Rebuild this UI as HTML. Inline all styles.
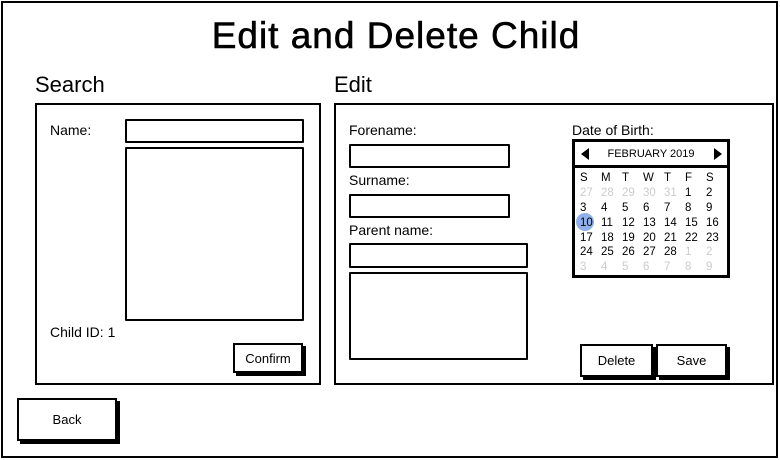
<!DOCTYPE html>
<html><head><style>
*{margin:0;padding:0;box-sizing:border-box}
body{width:780px;height:460px;background:#fff;font-family:"Liberation Sans",sans-serif;color:#000;position:relative;overflow:hidden}
.a{position:absolute}
.box{position:absolute;border:2px solid #000;background:#fff}
.in{position:absolute;border:2px solid #000;background:#fff;border-radius:1px}
.btn{position:absolute;border:2px solid #000;background:#fff;box-shadow:3px 3px 0 #000;font-size:13px;display:flex;align-items:center;justify-content:center}
.lbl{position:absolute;font-size:14px}
.cal td{width:21px;height:14.8px;font-size:11.5px;text-align:left;padding:0 0 0 2px}
.g{color:#ccc}
</style></head><body>
<div class="box" style="left:1px;top:1px;width:777px;height:457px"></div>
<div class="a" style="left:0;width:792px;top:15px;text-align:center;font-size:37px;font-weight:normal;letter-spacing:1px;-webkit-text-stroke:0.6px #000">Edit and Delete Child</div>
<div class="a" style="left:35px;top:72px;font-size:22px">Search</div>
<div class="a" style="left:334px;top:72px;font-size:22px">Edit</div>
<div class="box" style="left:35px;top:103px;width:286px;height:282px"></div>
<div class="box" style="left:334px;top:103px;width:440px;height:282px"></div>
<div class="lbl" style="left:50px;top:122px">Name:</div>
<div class="in" style="left:125px;top:119px;width:179px;height:24px"></div>
<div class="in" style="left:125px;top:147px;width:179px;height:174px"></div>
<div class="lbl" style="left:50px;top:324px">Child ID: 1</div>
<div class="btn" style="left:233px;top:343px;width:70px;height:30px">Confirm</div>
<div class="btn" style="left:17px;top:398px;width:100px;height:43px">Back</div>
<div class="lbl" style="left:349px;top:122px">Forename:</div>
<div class="in" style="left:349px;top:144px;width:161px;height:24px"></div>
<div class="lbl" style="left:349px;top:172px">Surname:</div>
<div class="in" style="left:349px;top:194px;width:161px;height:24px"></div>
<div class="lbl" style="left:349px;top:222px">Parent name:</div>
<div class="in" style="left:349px;top:243px;width:179px;height:25px"></div>
<div class="in" style="left:349px;top:272px;width:179px;height:88px"></div>
<div class="lbl" style="left:572px;top:122px">Date of Birth:</div>
<div class="box" style="left:572px;top:139px;width:158px;height:139px;border-width:3px">
 <div class="a" style="left:0;top:0;width:152px;height:26px;border-bottom:3px solid #000;font-size:11px;text-align:center;line-height:24px">FEBRUARY 2019</div>
 <div class="a" style="left:6px;top:6px;width:0;height:0;border-top:6px solid transparent;border-bottom:6px solid transparent;border-right:8px solid #000"></div>
 <div class="a" style="left:139px;top:6px;width:0;height:0;border-top:6px solid transparent;border-bottom:6px solid transparent;border-left:8px solid #000"></div>
 <div class="a" style="left:1px;top:71px;width:18px;height:18px;border-radius:50%;background:#8fb0e8"></div>
 <table class="cal a" style="left:3px;top:29px;border-collapse:collapse">
 <tr><td>S</td><td>M</td><td>T</td><td>W</td><td>T</td><td>F</td><td>S</td></tr>
 <tr><td class="g">27</td><td class="g">28</td><td class="g">29</td><td class="g">30</td><td class="g">31</td><td>1</td><td>2</td></tr>
 <tr><td>3</td><td>4</td><td>5</td><td>6</td><td>7</td><td>8</td><td>9</td></tr>
 <tr><td>10</td><td>11</td><td>12</td><td>13</td><td>14</td><td>15</td><td>16</td></tr>
 <tr><td>17</td><td>18</td><td>19</td><td>20</td><td>21</td><td>22</td><td>23</td></tr>
 <tr><td>24</td><td>25</td><td>26</td><td>27</td><td>28</td><td class="g">1</td><td class="g">2</td></tr>
 <tr><td class="g">3</td><td class="g">4</td><td class="g">5</td><td class="g">6</td><td class="g">7</td><td class="g">8</td><td class="g">9</td></tr>
 </table>
</div>
<div class="btn" style="left:580px;top:344px;width:73px;height:33px">Delete</div>
<div class="btn" style="left:656px;top:344px;width:71px;height:33px">Save</div>
</body></html>
